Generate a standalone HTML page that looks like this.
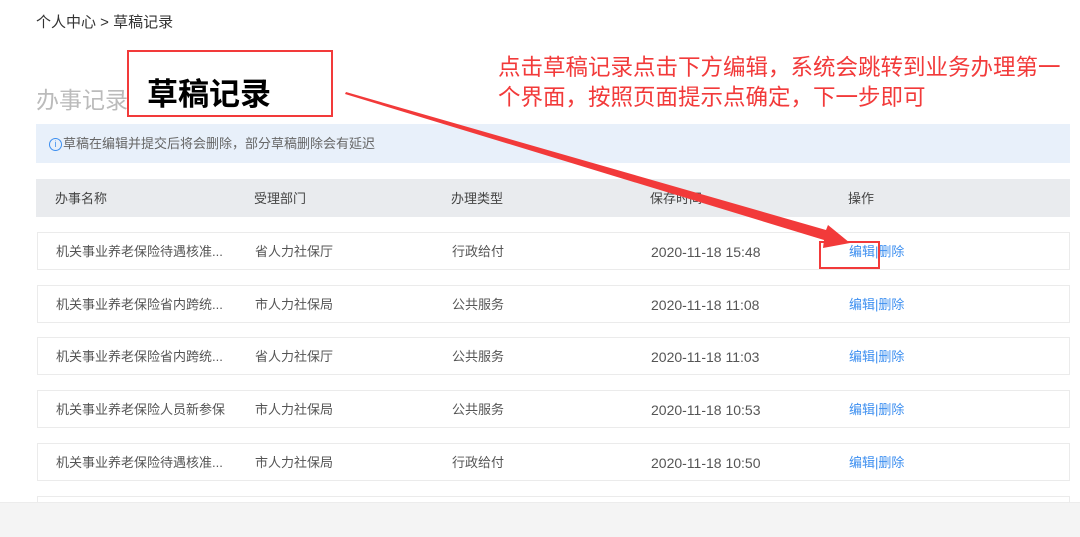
<!DOCTYPE html><html><head><meta charset="utf-8"><style>
body{margin:0;width:1080px;height:536px;overflow:hidden;background:#fff;font-family:"Liberation Sans","Noto Sans CJK SC",sans-serif;position:relative}
.a{position:absolute;white-space:nowrap}
.row{position:absolute;left:37px;width:1031px;height:36px;border:1px solid #ebebeb;background:#fff;font-size:13px;color:#555}
.row span{position:absolute;top:0;line-height:38px}
.c1{left:18px}.c2{left:217px}.c3{left:414px}.c4{left:613px;font-size:14px}.c5{left:811px;color:#3d8ff0}
</style></head><body>
<div class="a" style="left:36px;top:11px;font-size:15px;color:#333">个人中心 &gt; 草稿记录</div>
<div class="a" style="left:36px;top:81px;font-size:23px;color:#bbb">办事记录</div>
<div class="a" style="left:36px;top:124px;width:1034px;height:39px;background:#e8f0fa"></div>
<div class="a" style="left:49px;top:124px;line-height:40px;font-size:13px;color:#666"><span style="display:inline-block;width:11px;height:11px;border:1px solid #3d8ff0;border-radius:50%;font-size:9px;line-height:11px;text-align:center;color:#3d8ff0;vertical-align:middle;margin-right:1px">i</span>草稿在编辑并提交后将会删除，部分草稿删除会有延迟</div>
<div class="a" style="left:36px;top:179px;width:1034px;height:38px;background:#e9ebee;font-size:13px;color:#444;line-height:40px">
<span class="a" style="left:19px;top:0">办事名称</span><span class="a" style="left:218px;top:0">受理部门</span><span class="a" style="left:415px;top:0">办理类型</span><span class="a" style="left:614px;top:0">保存时间</span><span class="a" style="left:812px;top:0">操作</span></div>
<div class="row" style="top:232px"><span class="c1">机关事业养老保险待遇核准...</span><span class="c2">省人力社保厅</span><span class="c3">行政给付</span><span class="c4">2020-11-18 15:48</span><span class="c5">编辑|删除</span></div>
<div class="row" style="top:285px"><span class="c1">机关事业养老保险省内跨统...</span><span class="c2">市人力社保局</span><span class="c3">公共服务</span><span class="c4">2020-11-18 11:08</span><span class="c5">编辑|删除</span></div>
<div class="row" style="top:337px"><span class="c1">机关事业养老保险省内跨统...</span><span class="c2">省人力社保厅</span><span class="c3">公共服务</span><span class="c4">2020-11-18 11:03</span><span class="c5">编辑|删除</span></div>
<div class="row" style="top:390px"><span class="c1">机关事业养老保险人员新参保</span><span class="c2">市人力社保局</span><span class="c3">公共服务</span><span class="c4">2020-11-18 10:53</span><span class="c5">编辑|删除</span></div>
<div class="row" style="top:443px"><span class="c1">机关事业养老保险待遇核准...</span><span class="c2">市人力社保局</span><span class="c3">行政给付</span><span class="c4">2020-11-18 10:50</span><span class="c5">编辑|删除</span></div>
<div class="row" style="top:496px"></div>
<div class="a" style="left:0;top:502px;width:1080px;height:34px;background:#f4f4f4;border-top:1px solid #ececec"></div>
<div class="a" style="left:127px;top:50px;width:202px;height:63px;border:2px solid #f23a3a;background:#fff"></div>
<div class="a" style="left:147px;top:69px;font-size:31px;font-weight:bold;color:#000">草稿记录</div>
<div class="a" style="left:819px;top:241px;width:57px;height:24px;border:2px solid #f23a3a"></div>
<svg class="a" style="left:0;top:0" width="1080" height="536"><polygon points="345,94 346,92 826,230 828,225 850,243 823,248 824,240" fill="#f23a3a"/></svg>
<div class="a" style="left:498px;top:53px;font-size:22.5px;line-height:30px;color:#f23a3a">点击草稿记录点击下方编辑，系统会跳转到业务办理第一<br>个界面，按照页面提示点确定，下一步即可</div>
</body></html>
